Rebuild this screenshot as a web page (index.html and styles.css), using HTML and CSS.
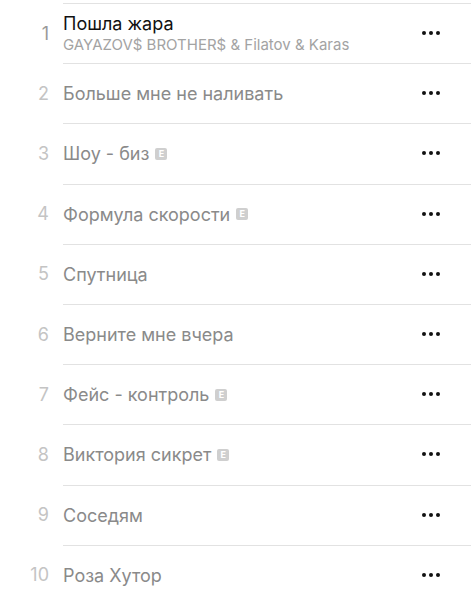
FILE: index.html
```html
<!DOCTYPE html>
<html lang="ru">
<head>
    <meta charset="UTF-8">
    <title>Треки</title>
    <link rel="stylesheet" href="styles.css">
</head>
<body>

    <ul class="tracks">
        <li class="track current">
            <span class="num">1</span>
            <div class="info">
                <div class="title">Пошла жара</div>
                <div class="artist">GAYAZOV$ BROTHER$ &amp; Filatov &amp; Karas</div>
            </div>
            <span class="more"><i></i><i></i><i></i></span>
        </li>
        <li class="track">
            <span class="num">2</span>
            <div class="info"><div class="title">Больше мне не наливать</div></div>
            <span class="more"><i></i><i></i><i></i></span>
        </li>
        <li class="track">
            <span class="num">3</span>
            <div class="info"><div class="title">Шоу - биз <span class="explicit">E</span></div></div>
            <span class="more"><i></i><i></i><i></i></span>
        </li>
        <li class="track">
            <span class="num">4</span>
            <div class="info"><div class="title">Формула скорости <span class="explicit">E</span></div></div>
            <span class="more"><i></i><i></i><i></i></span>
        </li>
        <li class="track">
            <span class="num">5</span>
            <div class="info"><div class="title">Спутница</div></div>
            <span class="more"><i></i><i></i><i></i></span>
        </li>
        <li class="track">
            <span class="num">6</span>
            <div class="info"><div class="title">Верните мне вчера</div></div>
            <span class="more"><i></i><i></i><i></i></span>
        </li>
        <li class="track">
            <span class="num">7</span>
            <div class="info"><div class="title">Фейс - контроль <span class="explicit">E</span></div></div>
            <span class="more"><i></i><i></i><i></i></span>
        </li>
        <li class="track">
            <span class="num">8</span>
            <div class="info"><div class="title">Виктория сикрет <span class="explicit">E</span></div></div>
            <span class="more"><i></i><i></i><i></i></span>
        </li>
        <li class="track">
            <span class="num">9</span>
            <div class="info"><div class="title">Соседям</div></div>
            <span class="more"><i></i><i></i><i></i></span>
        </li>
        <li class="track">
            <span class="num">10</span>
            <div class="info"><div class="title">Роза Хутор</div></div>
            <span class="more"><i></i><i></i><i></i></span>
        </li>
    </ul>

</body>
</html>
```

FILE: styles.css
```css
body {
    margin: 0;
    background: #fff;
    font-family: Inter, "Noto Sans", sans-serif;
    overflow: hidden;
}

.tracks {
    list-style: none;
    margin: 0;
    padding: 3px 0 0 0;
}

.track {
    display: flex;
    align-items: center;
    height: 60.2px;
}

.num {
    width: 49px;
    padding-right: 14px;
    text-align: right;
    font-size: 18px;
    color: #c4c4c4;
}

.info {
    flex: 1;
    align-self: stretch;
    display: flex;
    flex-direction: column;
    justify-content: center;
    border-top: 1px solid #e2e2e2;
}

.title {
    font-size: 18px;
    color: #8a8a8a;
    display: flex;
    align-items: center;
}

.artist {
    font-size: 15px;
    color: #a3a3a3;
    margin-top: 1px;
}

.current .num {
    color: #9a9a9a;
}

.current .title {
    color: #111;
}

.explicit {
    display: inline-block;
    width: 12px;
    height: 12px;
    margin-left: 6px;
    border-radius: 2px;
    background: #cfcfcf;
    color: #fff;
    font-size: 9px;
    font-weight: 700;
    line-height: 12px;
    text-align: center;
}

.more {
    position: relative;
    display: flex;
    gap: 3px;
    margin-right: 31px;
    margin-left: -49px;
}

.more i {
    width: 4px;
    height: 4px;
    border-radius: 50%;
    background: #111;
}
```
